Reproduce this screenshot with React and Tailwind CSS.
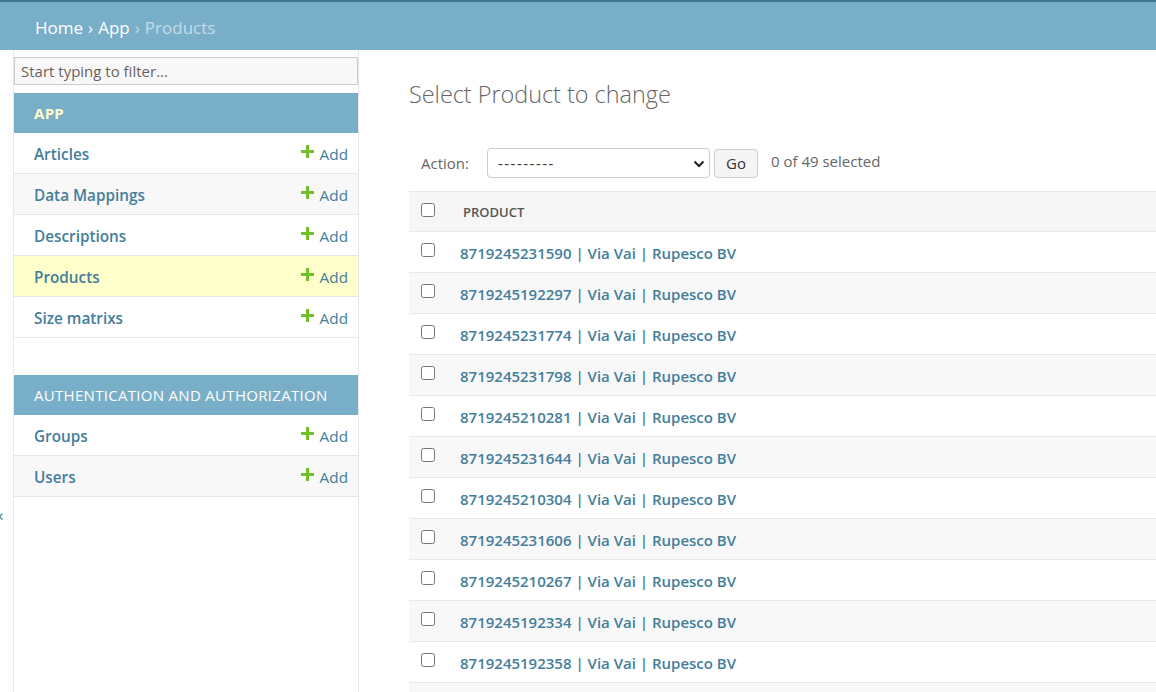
import React from 'react';

const appModels = [
  { name: 'Articles' },
  { name: 'Data Mappings' },
  { name: 'Descriptions' },
  { name: 'Products', current: true },
  { name: 'Size matrixs' },
];

const authModels = [{ name: 'Groups' }, { name: 'Users' }];

const products = [
  '8719245231590',
  '8719245192297',
  '8719245231774',
  '8719245231798',
  '8719245210281',
  '8719245231644',
  '8719245210304',
  '8719245231606',
  '8719245210267',
  '8719245192334',
  '8719245192358',
  '8719245231613',
];

const PlusIcon = () => (
  <svg width="13" height="13" viewBox="0 0 13 13" className="mr-[6px] -mt-[6px]">
    <path d="M5 0h3v5h5v3h-5v5h-3v-5h-5v-3h5z" fill="#70bf2b" />
  </svg>
);

const ModelRow = ({ model, index }) => {
  const bg = model.current ? 'bg-[#ffffcc]' : index % 2 === 1 ? 'bg-[#f8f8f8]' : 'bg-white';
  return (
    <div className={`flex items-center justify-between h-[41px] pt-[2px] px-5 border-b border-[#e8e8e8] ${bg}`}>
      <a className="font-semibold text-[#447e9b] text-[15.3px]">{model.name}</a>
      <a className="flex items-center text-[#447e9b] text-[15.3px] -mr-[10px]">
        <PlusIcon />
        Add
      </a>
    </div>
  );
};

const ModuleCaption = ({ children, current }) => (
  <div
    className={`h-[40px] flex items-center px-5 bg-[#79aec8] tracking-[0.3px] ${
      current ? 'text-[#ffffcc] font-bold' : 'text-white'
    }`}
  >
    {children}
  </div>
);

const App = () => {
  return (
    <div
      className="min-h-[692px] bg-white text-[#333] text-[15px]"
      style={{ fontFamily: '"Open Sans", "Noto Sans", sans-serif' }}
    >
      {/* breadcrumbs */}
      <div className="h-[50px] bg-[#79aec8] border-t-2 border-[#417690] flex items-center pt-[4px] px-[35px] text-[17px] text-white">
        <a>Home</a>
        <span className="mx-[5px]">›</span>
        <a>App</a>
        <span className="mx-[5px] text-[#c4dce8]">›</span>
        <span className="text-[#c4dce8]">Products</span>
      </div>

      <div className="flex">
        {/* sidebar toggle */}
        <div className="w-[14px] border-r border-[#e8e8e8] overflow-hidden relative">
          <span className="absolute left-[-5px] top-[452px] text-[#447e9b] text-[17px]">«</span>
        </div>

        {/* nav sidebar */}
        <div className="w-[345px] border-r border-[#e8e8e8] shrink-0 min-h-[642px]">
          <input
            className="block w-[344px] mt-[7px] mb-[8px] h-[28px] px-[6px] bg-[#f8f8f8] border border-[#cccccc] text-[15px] placeholder:text-[#6b6360] outline-none"
            placeholder="Start typing to filter..."
          />
          <ModuleCaption current>APP</ModuleCaption>
          {appModels.map((m, i) => (
            <ModelRow key={m.name} model={m} index={i} />
          ))}
          <div className="h-[37px]" />
          <ModuleCaption>AUTHENTICATION AND AUTHORIZATION</ModuleCaption>
          {authModels.map((m, i) => (
            <ModelRow key={m.name} model={m} index={i} />
          ))}
        </div>

        {/* content */}
        <div className="flex-1 pl-[50px] pt-[27px] overflow-hidden">
          <h1 className="text-[23.4px] font-light text-[#666] leading-[34px] mb-[37px]">
            Select Product to change
          </h1>

          <div className="flex items-center h-[30px] pl-[12px] mb-[13px] text-[#666]">
            <label className="mr-[18px]">Action:</label>
            <div className="relative w-[223px] h-[30px] border border-[#cccccc] rounded-[4px] flex items-center px-[10px] text-[#333] tracking-[1.5px]">
              ---------
              <svg
                width="12"
                height="8"
                viewBox="0 0 12 8"
                className="absolute right-[4px] top-[11px]"
              >
                <path d="M1.5 1.5l4.5 4.5 4.5-4.5" stroke="#222" strokeWidth="2" fill="none" />
              </svg>
            </div>
            <button className="ml-[4px] w-[44px] h-[29px] mt-[1px] border border-[#cccccc] rounded-[4px] bg-[#f5f5f5] text-[#333]">
              Go
            </button>
            <span className="ml-[13px] -mt-[3px]">0 of 49 selected</span>
          </div>

          <div className="w-[900px]">
            <div className="flex items-center h-[41px] bg-[#f6f6f6] border-y border-[#e8e8e8]">
              <input type="checkbox" className="ml-[12px] w-[14px] h-[14px] -mt-[4px]" />
              <span className="ml-[28px] mt-[2px] text-[13px] font-semibold text-[#555]">PRODUCT</span>
            </div>
            {products.map((p, i) => (
              <div
                key={p}
                className={`flex items-center h-[41px] border-b border-[#e8e8e8] ${
                  i % 2 === 1 ? 'bg-[#f8f8f8]' : 'bg-white'
                }`}
              >
                <input type="checkbox" className="ml-[12px] w-[14px] h-[14px] -mt-[4px]" />
                <a className="ml-[25px] mt-[2px] font-semibold text-[#447e9b]">
                  {p} | Via Vai | Rupesco BV
                </a>
              </div>
            ))}
          </div>
        </div>
      </div>
    </div>
  );
};

export default App;
